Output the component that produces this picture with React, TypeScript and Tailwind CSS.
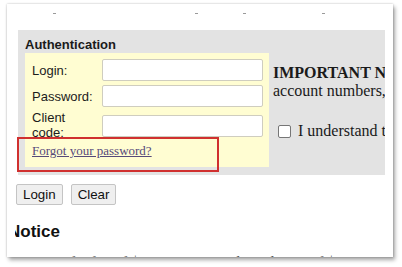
import React from "react";

const sans = "font-['Liberation_Sans',Arial,sans-serif]";
const serif = "font-['Liberation_Serif','Times_New_Roman',serif]";

function Field({ label, twoLine }: { label: React.ReactNode; twoLine?: boolean }) {
  return (
    <div className={`flex ${twoLine ? "items-start h-[30px]" : "items-center h-[22px]"}`}>
      <div className="w-[70px] text-[13px] leading-[15px] text-[#1c1c1c]">{label}</div>
      <div
        className={`w-[161px] h-[22px] bg-white border border-[#cfcdbf] rounded-[2px] ${twoLine ? "mt-[5px]" : ""}`}
      />
    </div>
  );
}

export default function App() {
  return (
    <div className={`relative w-[402px] h-[267px] bg-white overflow-hidden ${sans}`}>
      {/* screenshot card */}
      <div className="ml-[7px] mt-[4px] w-[386px] h-[253px] bg-white overflow-hidden shadow-[0_0_2px_rgba(0,0,0,0.25),2px_3px_4px_rgba(0,0,0,0.35)] pl-[8px]">
        <div className="w-[378px] h-[253px] overflow-hidden">
          {/* clipped previous line */}
          <div className="h-[26px] flex items-start pt-[9px]">
            <span className="ml-[38px] w-[3px] h-[1px] bg-[#9a9a9a]" />
            <span className="ml-[139px] w-[3px] h-[1px] bg-[#9a9a9a]" />
            <span className="ml-[45px] w-[3px] h-[1px] bg-[#9a9a9a]" />
            <span className="ml-[76px] w-[3px] h-[1px] bg-[#9a9a9a]" />
          </div>

          {/* gray auth panel */}
          <div className="ml-[3px] w-[367px] bg-[#e3e3e3] pl-[7px] pt-[7px] pb-[8px] overflow-hidden">
            <div className="text-[13px] leading-[15px] font-bold text-[#1a1a1a]">Authentication</div>
            <div className="mt-[1px] flex items-start">
              <div className="w-[244px] shrink-0 bg-[#fffdd2] pl-[7px] pt-[6px] pb-[9px]">
                <Field label="Login:" />
                <div className="mt-[4px]">
                  <Field label="Password:" />
                </div>
                <div className="mt-[3px]">
                  <Field
                    twoLine
                    label={
                      <>
                        Client
                        <br />
                        code:
                      </>
                    }
                  />
                </div>
                <div className={`mt-[3px] text-[13px] leading-[15px] ${serif}`}>
                  <a className="text-[#56497a] underline">Forgot your password?</a>
                </div>
              </div>
              <div className={`ml-[4px] pt-[11px] whitespace-nowrap text-[16px] leading-[18.4px] text-[#1a1a1a] ${serif}`}>
                <div>
                  <b>IMPORTANT NOTICE:</b> Never share your password or
                </div>
                <div>account numbers, with anyone.</div>
                <div className="mt-[21px] flex items-center">
                  <span className="ml-[5px] mr-[7px] w-[13px] h-[13px] rounded-[2px] border border-[#767676] bg-white" />
                  I understand this notice
                </div>
              </div>
            </div>
          </div>

          {/* buttons */}
          <div className="mt-[9px] ml-[1px] flex gap-[8px]">
            <button className="h-[21px] px-[6px] text-[13.33px] leading-[19px] text-[#111] bg-[#efefef] border border-[#c4c4c4] rounded-[2px]">
              Login
            </button>
            <button className="h-[21px] px-[6px] text-[13.33px] leading-[19px] text-[#111] bg-[#efefef] border border-[#c4c4c4] rounded-[2px]">
              Clear
            </button>
          </div>

          {/* notice */}
          <div className="mt-[17px] -ml-[7px] text-[17px] leading-[20px] font-bold text-[#111]">Notice</div>
          <div className={`mt-[12px] -ml-[2px] whitespace-nowrap text-[16px] leading-[18px] text-[#555] ${serif}`}>
            In case of a fee of $20.10 per month, a charge of $20.40 and a further fee will apply to all
          </div>
        </div>
      </div>

      {/* red annotation box */}
      <div className="absolute left-[17px] top-[137px] w-[202px] h-[35px] border-2 border-[#d0302f]" />
    </div>
  );
}
